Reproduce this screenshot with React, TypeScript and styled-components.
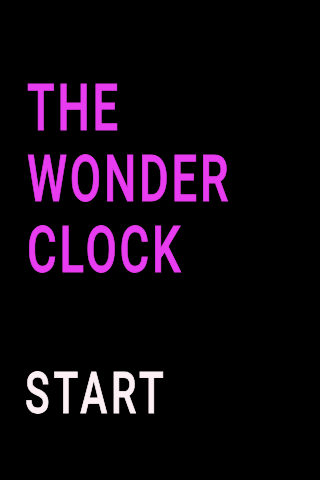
import styled, { createGlobalStyle } from "styled-components";

const GlobalStyle = createGlobalStyle`
  html, body {
    margin: 0;
    padding: 0;
    background: #000;
  }
  #root {
    min-height: 100vh;
  }
`;

const Screen = styled.div`
  display: flex;
  flex-direction: column;
  width: 320px;
  height: 480px;
  padding: 73px 0 0 27px;
  box-sizing: border-box;
  background: #000;
  font-family: Roboto, "Liberation Sans", sans-serif;
`;

const Title = styled.h1`
  display: flex;
  flex-direction: column;
  align-items: flex-start;
  margin: 0;
  color: #e83cf0;
  font-size: 65px;
  font-weight: 500;
  line-height: 71px;
  letter-spacing: 4px;
  -webkit-text-stroke: 0.8px currentColor;
`;

const TitleLine = styled.span`
  display: block;
  transform: scaleX(0.7);
  transform-origin: left center;
`;

const StartButton = styled.button`
  align-self: flex-start;
  margin: 75px 0 0 -2px;
  padding: 0;
  border: none;
  background: none;
  color: #fdf0f5;
  font-family: inherit;
  font-size: 58px;
  font-weight: 500;
  line-height: 64px;
  letter-spacing: 5.5px;
  -webkit-text-stroke: 0.8px currentColor;
  transform: scaleX(0.7);
  transform-origin: left center;
  cursor: pointer;
`;

const App = () => {
  const lines = ["THE", "WONDER", "CLOCK"];

  return (
    <>
      <GlobalStyle />
      <Screen>
        <Title>
          {lines.map((line) => (
            <TitleLine key={line}>{line}</TitleLine>
          ))}
        </Title>
        <StartButton>START</StartButton>
      </Screen>
    </>
  );
};

export default App;
